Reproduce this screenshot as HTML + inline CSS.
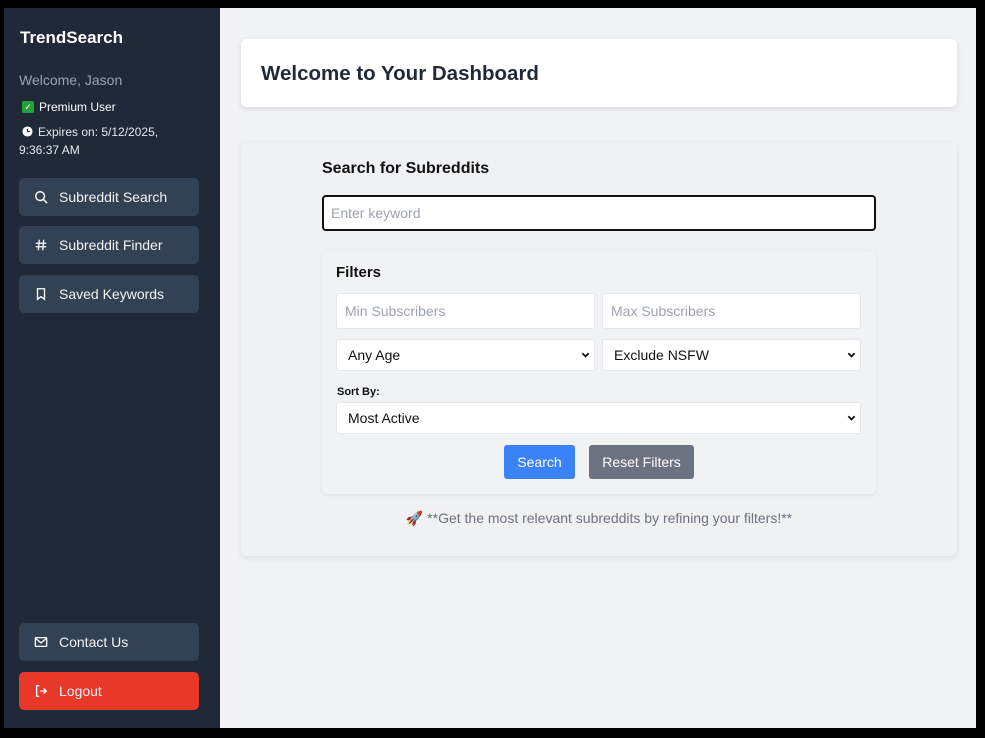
<!DOCTYPE html>
<html><head><style>
*{box-sizing:border-box;margin:0;padding:0}
body{width:985px;height:738px;background:#000;font-family:"Liberation Sans",sans-serif;position:relative;overflow:hidden}
.side{position:absolute;left:4px;top:8px;width:216px;height:720px;background:#1f2937;color:#fff}
.main{position:absolute;left:220px;top:8px;width:756px;height:720px;background:#f0f2f5}
.brand{position:absolute;left:16px;top:20px;font-size:17px;font-weight:bold}
.wel{position:absolute;left:15px;top:64px;font-size:14px;color:#9ca3af}
.prem{position:absolute;left:18px;top:92px;font-size:12px;display:flex;align-items:center;gap:5px}
.chk{width:12px;height:12px;background:#22a33a;border-radius:2px;color:#fff;font-size:9px;line-height:12px;text-align:center}
.exp{position:absolute;left:15px;top:115px;font-size:12px;line-height:18px;color:#e5e7eb}
.btn{position:absolute;left:15px;width:180px;height:38px;border-radius:5px;background:#334155;display:flex;align-items:center;padding-left:15px;gap:11px;font-size:14px;color:#f3f4f6}
.btn svg{width:14px;height:14px}
.card1{position:absolute;left:21px;top:31px;width:716px;height:68px;background:#fff;border-radius:6px;box-shadow:0 2px 6px rgba(0,0,0,.1)}
.card1 h1{position:absolute;left:20px;top:23px;font-size:20.5px;color:#1f2937}
.card2{position:absolute;left:21px;top:134px;width:716px;height:414px;background:#eff1f3;border-radius:6px;box-shadow:0 2px 6px rgba(0,0,0,.08)}
.h2{position:absolute;left:81px;top:18px;font-size:16px;font-weight:bold;color:#111}
.kw{position:absolute;left:81px;top:53px;width:554px;height:36px;border:2px solid #111;border-radius:4px;background:#fff;font-size:14px;color:#9ca3af;padding:8px 7px}
.filt{position:absolute;left:81px;top:109px;width:554px;height:243px;background:#f0f2f4;border-radius:5px;box-shadow:0 1px 3px rgba(0,0,0,.08)}
.fl{position:absolute;font-size:14px;background:#fff;border:1px solid #e5e7eb;border-radius:3px;padding:0 8px;display:flex;align-items:center;color:#111}
.ph{color:#9ca3af}
.arr{position:absolute;right:4px;top:50%;margin-top:-4px;width:9px;height:8px}
</style></head><body>
<div class="side">
<div class="brand">TrendSearch</div>
<div class="wel">Welcome, Jason</div>
<div class="prem"><span class="chk">✓</span>Premium User</div>
<div class="exp"><svg width="11" height="11" viewBox="0 0 12 12" style="margin:0 5px 0 3px;vertical-align:-1px"><circle cx="6" cy="6" r="5.5" fill="#fff"/><path d="M6 3v3h2.5" stroke="#1f2937" stroke-width="1.3" fill="none"/></svg>Expires on: 5/12/2025,<br>9:36:37 AM</div>
<div class="btn" style="top:170px"><svg viewBox="0 0 16 16" fill="none" stroke="#fff" stroke-width="1.6"><circle cx="7" cy="7" r="5"/><path d="M11 11l4 4"/></svg>Subreddit Search</div>
<div class="btn" style="top:218px"><svg viewBox="0 0 16 16" fill="none" stroke="#fff" stroke-width="1.5"><path d="M6 2L5 14M11 2l-1 12M2 6h12M2 10h12"/></svg>Subreddit Finder</div>
<div class="btn" style="top:267px"><svg viewBox="0 0 16 16" fill="none" stroke="#fff" stroke-width="1.5"><path d="M4 2h8v12l-4-3-4 3z"/></svg>Saved Keywords</div>
<div class="btn" style="top:615px"><svg viewBox="0 0 16 16" fill="none" stroke="#fff" stroke-width="1.5"><rect x="1.5" y="3" width="13" height="10" rx="1"/><path d="M2 4l6 5 6-5"/></svg>Contact Us</div>
<div class="btn" style="top:664px;background:#e8382a"><svg viewBox="0 0 16 16" fill="none" stroke="#fff" stroke-width="1.5"><path d="M6 2H3v12h3M7 8h7M11 5l3 3-3 3"/></svg>Logout</div>
</div>
<div class="main">
<div class="card1"><h1>Welcome to Your Dashboard</h1></div>
<div class="card2">
<div class="h2">Search for Subreddits</div>
<div class="kw">Enter keyword</div>
<div class="filt">
<div style="position:absolute;left:14px;top:13px;font-size:15px;font-weight:bold;color:#111">Filters</div>
<div class="fl ph" style="left:14px;top:42px;width:259px;height:36px">Min Subscribers</div>
<div class="fl ph" style="left:280px;top:42px;width:259px;height:36px">Max Subscribers</div>
<div class="fl" style="left:14px;top:88px;width:259px;height:32px;padding-left:11px">Any Age<svg class="arr" viewBox="0 0 10 8"><path d="M1.5 2l3.5 3.5L8.5 2" stroke="#111" stroke-width="2" fill="none"/></svg></div>
<div class="fl" style="left:280px;top:88px;width:259px;height:32px;padding-left:11px">Exclude NSFW<svg class="arr" viewBox="0 0 10 8"><path d="M1.5 2l3.5 3.5L8.5 2" stroke="#111" stroke-width="2" fill="none"/></svg></div>
<div style="position:absolute;left:15px;top:135px;font-size:11px;font-weight:bold;color:#111">Sort By:</div>
<div class="fl" style="left:14px;top:151px;width:525px;height:32px;padding-left:11px">Most Active<svg class="arr" viewBox="0 0 10 8"><path d="M1.5 2l3.5 3.5L8.5 2" stroke="#111" stroke-width="2" fill="none"/></svg></div>
<div style="position:absolute;left:182px;top:194px;width:71px;height:34px;background:#3b82f6;color:#fff;border-radius:3px;font-size:14px;text-align:center;line-height:34px">Search</div>
<div style="position:absolute;left:267px;top:194px;width:105px;height:34px;background:#6b7280;color:#fff;border-radius:3px;font-size:14px;text-align:center;line-height:34px">Reset Filters</div>
</div>
<div style="position:absolute;left:0;width:716px;top:368px;text-align:center;font-size:14px;color:#6b7280">🚀 **Get the most relevant subreddits by refining your filters!**</div>
</div>
</div>
</body></html>
